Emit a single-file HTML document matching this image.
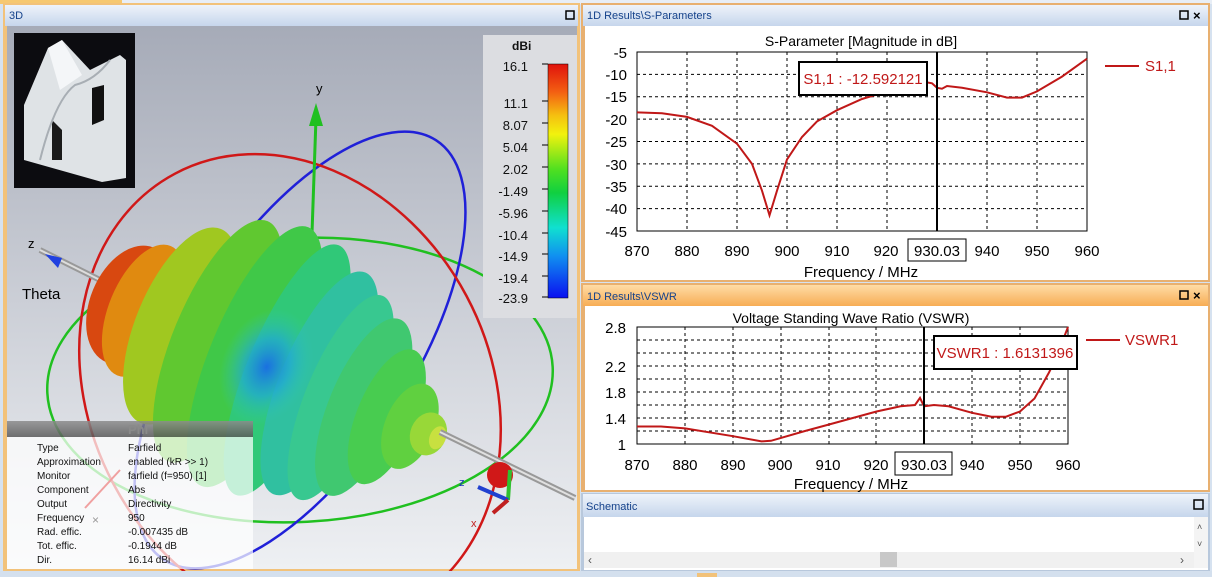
<!DOCTYPE html>
<html><head><meta charset="utf-8"><style>
html,body{margin:0;padding:0;width:1212px;height:577px;overflow:hidden;background:#d6e2f0}
svg{display:block;overflow:hidden}
text{font-family:"Liberation Sans",sans-serif}
</style></head><body>
<svg width="1212" height="577" viewBox="0 0 1212 577" xmlns="http://www.w3.org/2000/svg">
<defs>
<linearGradient id="bg3d" x1="0" y1="0" x2="0" y2="1"><stop offset="0" stop-color="#a6abb8"/><stop offset="0.6" stop-color="#d2d5dc"/><stop offset="1" stop-color="#eef0f3"/></linearGradient>
<linearGradient id="tb" x1="0" y1="0" x2="0" y2="1"><stop offset="0" stop-color="#eef3fa"/><stop offset="1" stop-color="#c6d6ec"/></linearGradient>
<linearGradient id="tbo" x1="0" y1="0" x2="0" y2="1"><stop offset="0" stop-color="#ffdca6"/><stop offset="1" stop-color="#f7ad55"/></linearGradient>
<linearGradient id="cbar" x1="0" y1="0" x2="0" y2="1"><stop offset="0" stop-color="#e0120c"/><stop offset="0.12" stop-color="#f36012"/><stop offset="0.22" stop-color="#f5c010"/><stop offset="0.3" stop-color="#f2f20e"/><stop offset="0.45" stop-color="#50e020"/><stop offset="0.55" stop-color="#10d040"/><stop offset="0.7" stop-color="#10e0d0"/><stop offset="0.82" stop-color="#1090f0"/><stop offset="1" stop-color="#0a10f0"/></linearGradient>
<radialGradient id="dip" cx="0.5" cy="0.5" r="0.5"><stop offset="0" stop-color="#1a70e0"/><stop offset="0.5" stop-color="#20a8d8" stop-opacity="0.7"/><stop offset="1" stop-color="#30c8b0" stop-opacity="0"/></radialGradient>
<linearGradient id="hdr" x1="0" y1="0" x2="0" y2="1"><stop offset="0" stop-color="#8c8c8c"/><stop offset="1" stop-color="#5a5a5a"/></linearGradient>
</defs>

<rect x="0" y="0" width="1212" height="4" fill="#e8eef6"/>
<rect x="0" y="0" width="122" height="4" fill="#f6c870"/>
<rect x="3" y="3" width="577" height="569" fill="#f2c27a"/>
<rect x="5" y="5" width="573" height="21" fill="url(#tb)"/>
<text x="9" y="19" font-size="11" fill="#15428b">3D</text>
<rect x="566" y="11" width="8" height="8" fill="none" stroke="#000" stroke-width="1.5"/>
<rect x="7" y="26" width="570" height="543" fill="url(#bg3d)"/>

<g fill="none" stroke-width="2.5">
<ellipse cx="300" cy="380" rx="253" ry="142" stroke="#20c020" transform="rotate(-3 300 380)"/>
<ellipse cx="300" cy="350" rx="112" ry="250" stroke="#2020d8" transform="rotate(33 300 350)"/>
<ellipse cx="290" cy="390" rx="200" ry="245" stroke="#d01818" transform="rotate(-28 290 390)"/>
</g>
<line x1="311" y1="262" x2="316" y2="118" stroke="#20c020" stroke-width="3"/>
<polygon points="316,103 309,126 323,126" fill="#20c020"/>
<text x="316" y="93" font-size="13" font-family="Liberation Mono" fill="#000">y</text>

<line x1="40" y1="250" x2="100" y2="280" stroke="#999" stroke-width="6"/>
<line x1="40" y1="250" x2="100" y2="280" stroke="#ddd" stroke-width="2"/>
<polygon points="45,254 62,258 58,268" fill="#2040e0"/>
<text x="28" y="248" font-size="13" font-family="Liberation Mono">z</text>
<text x="22" y="299" font-size="15" font-family="Liberation Mono">Theta</text>

<g transform="translate(95 285) rotate(22.5)">
<ellipse cx="40" cy="5" rx="40" ry="62" fill="#d84810"/>
<ellipse cx="55" cy="5" rx="35" ry="70" fill="#e08a10"/>
<ellipse cx="95" cy="5" rx="45" ry="105" fill="#a0c820"/>
<ellipse cx="135" cy="5" rx="45" ry="130" fill="#60c830"/>
<ellipse cx="175" cy="5" rx="45" ry="140" fill="#40c848"/>
<ellipse cx="210" cy="5" rx="40" ry="135" fill="#30c878"/>
<ellipse cx="245" cy="5" rx="40" ry="120" fill="#30c0a0"/>
<ellipse cx="270" cy="10" rx="35" ry="110" fill="#38c890"/>
<ellipse cx="295" cy="10" rx="35" ry="95" fill="#40c870"/>
<ellipse cx="320" cy="10" rx="30" ry="72" fill="#48cc50"/>
<ellipse cx="345" cy="10" rx="25" ry="45" fill="#60d040"/>
<ellipse cx="365" cy="10" rx="18" ry="22" fill="#98d838"/>
<ellipse cx="375" cy="10" rx="8" ry="12" fill="#c8e040"/>
<ellipse cx="190" cy="10" rx="45" ry="60" fill="url(#dip)"/>
</g>
<line x1="440" y1="432" x2="575" y2="498" stroke="#999" stroke-width="6"/>
<line x1="440" y1="432" x2="575" y2="498" stroke="#e0e0e0" stroke-width="2"/>
<circle cx="500" cy="475" r="13" fill="#d01818"/>
<line x1="508" y1="500" x2="510" y2="470" stroke="#30c030" stroke-width="4"/>
<line x1="508" y1="500" x2="478" y2="487" stroke="#2040d0" stroke-width="4"/>
<line x1="508" y1="500" x2="493" y2="513" stroke="#c02020" stroke-width="4"/>
<text x="459" y="486" font-size="11" fill="#1a30c0">z</text>
<text x="471" y="527" font-size="11" fill="#c02020">x</text>

<rect x="14" y="33" width="121" height="155" fill="#0c0c10"/>
<polygon points="24,105 48,48 62,40 90,70 120,55 126,60 126,178 102,182 24,160" fill="#dfe3e6"/>
<polygon points="48,48 62,40 82,75 60,90" fill="#f4f6f8"/>
<polygon points="52,120 62,130 62,160 52,160" fill="#1a1a1a"/>
<polygon points="92,88 104,85 104,120 92,125" fill="#111"/>
<path d="M40 160 Q55 100 75 85 Q95 80 110 60" stroke="#a8aeb4" stroke-width="2" fill="none"/>

<rect x="483" y="35" width="94" height="283" fill="#dcdde1"/>
<text x="512" y="50" font-size="12" font-family="Liberation Mono" font-weight="bold" fill="#111">dBi</text>
<rect x="548" y="64" width="20" height="234" fill="url(#cbar)" stroke="#000" stroke-width="0.5"/>
<g font-family="Liberation Mono" font-size="13" fill="#111" text-anchor="end">
<text x="528" y="71">16.1</text><text x="528" y="108">11.1</text><text x="528" y="130">8.07</text>
<text x="528" y="152">5.04</text><text x="528" y="174">2.02</text><text x="528" y="196">-1.49</text>
<text x="528" y="218">-5.96</text><text x="528" y="240">-10.4</text><text x="528" y="261">-14.9</text>
<text x="528" y="283">-19.4</text><text x="528" y="303">-23.9</text>
</g>
<g stroke="#000" stroke-width="1"><line x1="542" y1="64" x2="548" y2="64"/><line x1="542" y1="101" x2="548" y2="101"/><line x1="542" y1="123" x2="548" y2="123"/><line x1="542" y1="145" x2="548" y2="145"/><line x1="542" y1="167" x2="548" y2="167"/><line x1="542" y1="189" x2="548" y2="189"/><line x1="542" y1="211" x2="548" y2="211"/><line x1="542" y1="233" x2="548" y2="233"/><line x1="542" y1="254" x2="548" y2="254"/><line x1="542" y1="276" x2="548" y2="276"/><line x1="542" y1="297" x2="548" y2="297"/></g>

<rect x="7" y="421" width="246" height="16" fill="url(#hdr)" opacity="0.85"/>
<text x="128" y="434" font-size="13" font-weight="bold" fill="#8a8a8a">Phi</text>
<rect x="7" y="437" width="246" height="132" fill="#ffffff" opacity="0.72"/>
<line x1="85" y1="508" x2="120" y2="470" stroke="#f0a0a0" stroke-width="2"/>
<text x="92" y="524" font-size="12" fill="#999">×</text>
<g font-size="10" fill="#111">
<text x="37" y="451">Type</text><text x="128" y="451">Farfield</text>
<text x="37" y="465">Approximation</text><text x="128" y="465">enabled (kR &gt;&gt; 1)</text>
<text x="37" y="479">Monitor</text><text x="128" y="479">farfield (f=950) [1]</text>
<text x="37" y="493">Component</text><text x="128" y="493">Abs</text>
<text x="37" y="507">Output</text><text x="128" y="507">Directivity</text>
<text x="37" y="521">Frequency</text><text x="128" y="521">950</text>
<text x="37" y="535">Rad. effic.</text><text x="128" y="535">-0.007435 dB</text>
<text x="37" y="549">Tot. effic.</text><text x="128" y="549">-0.1944 dB</text>
<text x="37" y="563">Dir.</text><text x="128" y="563">16.14 dBi</text>
</g>

<rect x="581" y="3" width="629" height="279" fill="#e8b070"/>
<rect x="583" y="5" width="625" height="21" fill="url(#tb)"/>
<text x="587" y="19" font-size="11" fill="#15428b">1D Results\S-Parameters</text>
<rect x="1180" y="11" width="8" height="8" fill="none" stroke="#000" stroke-width="1.5"/>
<text x="1193" y="20" font-size="13" font-weight="bold">×</text>
<rect x="585" y="26" width="623" height="254" fill="#fff"/>
<text x="861" y="46" font-size="14" text-anchor="middle">S-Parameter [Magnitude in dB]</text>
<g stroke="#000" stroke-width="1" stroke-dasharray="3,3">
<line x1="637" y1="74.4" x2="1087" y2="74.4"/><line x1="637" y1="96.8" x2="1087" y2="96.8"/><line x1="637" y1="119.1" x2="1087" y2="119.1"/><line x1="637" y1="141.5" x2="1087" y2="141.5"/><line x1="637" y1="163.9" x2="1087" y2="163.9"/><line x1="637" y1="186.3" x2="1087" y2="186.3"/><line x1="637" y1="208.6" x2="1087" y2="208.6"/>
<line x1="687" y1="52" x2="687" y2="231"/><line x1="737" y1="52" x2="737" y2="231"/><line x1="787" y1="52" x2="787" y2="231"/><line x1="837" y1="52" x2="837" y2="231"/><line x1="887" y1="52" x2="887" y2="231"/><line x1="987" y1="52" x2="987" y2="231"/><line x1="1037" y1="52" x2="1037" y2="231"/>
</g>
<rect x="637" y="52" width="450" height="179" fill="none" stroke="#000" stroke-width="1"/>
<polyline fill="none" stroke="#c01818" stroke-width="2" points="637,112.4 662,113.3 687,116.9 712,125.8 737,143.7 752,163.9 762,190.7 769.5,215.3 777,190.7 787,159.4 802,137 817,121.4 837,110.2 862,99 887,91.4 912,86.9 927,82.4 932,83.3 937,87.8 942,88.7 947,86 962,87.8 987,92.3 1007,97.6 1022,97.6 1037,91.4 1062,76.6 1087,58.7"/>
<line x1="937" y1="52" x2="937" y2="231" stroke="#000" stroke-width="2"/>
<rect x="799" y="62" width="128" height="33" fill="#fff" stroke="#000" stroke-width="2"/>
<text x="863" y="84" font-size="15" fill="#c01818" text-anchor="middle">S1,1 : -12.592121</text>
<g font-size="15" text-anchor="end">
<text x="627" y="58">-5</text><text x="627" y="80">-10</text><text x="627" y="102">-15</text><text x="627" y="125">-20</text><text x="627" y="147">-25</text><text x="627" y="170">-30</text><text x="627" y="192">-35</text><text x="627" y="214">-40</text><text x="627" y="237">-45</text>
</g>
<g font-size="15" text-anchor="middle">
<text x="637" y="256">870</text><text x="687" y="256">880</text><text x="737" y="256">890</text><text x="787" y="256">900</text><text x="837" y="256">910</text><text x="886" y="256">920</text><text x="937" y="256">930.03</text><text x="987" y="256">940</text><text x="1037" y="256">950</text><text x="1087" y="256">960</text>
</g>
<rect x="908" y="239" width="58" height="22" fill="none" stroke="#000"/>
<text x="861" y="277" font-size="15" text-anchor="middle">Frequency / MHz</text>
<line x1="1105" y1="66" x2="1139" y2="66" stroke="#c01818" stroke-width="2"/>
<text x="1145" y="71" font-size="15" fill="#c01818">S1,1</text>

<rect x="581" y="283" width="629" height="209" fill="#e8b070"/>
<rect x="583" y="285" width="625" height="21" fill="url(#tbo)"/>
<text x="587" y="300" font-size="11" fill="#15428b">1D Results\VSWR</text>
<rect x="1180" y="291" width="8" height="8" fill="none" stroke="#000" stroke-width="1.5"/>
<text x="1193" y="300" font-size="13" font-weight="bold">×</text>
<rect x="585" y="306" width="623" height="184" fill="#fff"/>
<text x="851" y="323" font-size="14" text-anchor="middle">Voltage Standing Wave Ratio (VSWR)</text>
<g stroke="#000" stroke-width="1" stroke-dasharray="3,3">
<line x1="637" y1="340" x2="1068" y2="340"/><line x1="637" y1="353" x2="1068" y2="353"/><line x1="637" y1="366" x2="1068" y2="366"/><line x1="637" y1="379" x2="1068" y2="379"/><line x1="637" y1="392" x2="1068" y2="392"/><line x1="637" y1="405" x2="1068" y2="405"/><line x1="637" y1="418" x2="1068" y2="418"/><line x1="637" y1="431" x2="1068" y2="431"/>
<line x1="685" y1="327" x2="685" y2="444"/><line x1="733" y1="327" x2="733" y2="444"/><line x1="781" y1="327" x2="781" y2="444"/><line x1="829" y1="327" x2="829" y2="444"/><line x1="876" y1="327" x2="876" y2="444"/><line x1="972" y1="327" x2="972" y2="444"/><line x1="1020" y1="327" x2="1020" y2="444"/>
</g>
<rect x="637" y="327" width="431" height="117" fill="none" stroke="#000" stroke-width="1"/>
<polyline fill="none" stroke="#c01818" stroke-width="2" points="637,426.5 661,426.5 685,428.4 733,436.2 761.5,441.4 771,440.8 805,431 829,424.5 876.5,411.5 900.5,406.3 915,405 920,397.9 924,406.3 934,405 948.5,406.3 972,412.8 991.5,416.7 1006,416.7 1020,411.5 1034.5,398.5 1049,372.5 1058.5,353 1063,340 1068,327"/>
<line x1="924" y1="327" x2="924" y2="444" stroke="#000" stroke-width="2"/>
<rect x="934" y="336" width="143" height="33" fill="#fff" stroke="#000" stroke-width="2"/>
<text x="1005" y="358" font-size="15" fill="#c01818" text-anchor="middle">VSWR1 : 1.6131396</text>
<g font-size="15" text-anchor="end">
<text x="626" y="333">2.8</text><text x="626" y="372">2.2</text><text x="626" y="398">1.8</text><text x="626" y="424">1.4</text><text x="626" y="450">1</text>
</g>
<g font-size="15" text-anchor="middle">
<text x="637" y="470">870</text><text x="685" y="470">880</text><text x="733" y="470">890</text><text x="780" y="470">900</text><text x="828" y="470">910</text><text x="876" y="470">920</text><text x="924" y="470">930.03</text><text x="972" y="470">940</text><text x="1020" y="470">950</text><text x="1068" y="470">960</text>
</g>
<rect x="895" y="452" width="57" height="23" fill="none" stroke="#000"/>
<text x="851" y="489" font-size="15" text-anchor="middle">Frequency / MHz</text>
<line x1="1086" y1="340" x2="1120" y2="340" stroke="#c01818" stroke-width="2"/>
<text x="1125" y="345" font-size="15" fill="#c01818">VSWR1</text>

<rect x="581" y="493" width="629" height="78" fill="#b8c8dc"/>
<rect x="583" y="494" width="625" height="23" fill="url(#tb)"/>
<text x="586" y="510" font-size="11" fill="#15428b">Schematic</text>
<rect x="1194" y="500" width="9" height="9" fill="none" stroke="#000" stroke-width="1.5"/>
<rect x="584" y="517" width="624" height="53" fill="#fff"/>
<rect x="584" y="552" width="610" height="16" fill="#f0f0f0"/>
<rect x="880" y="552" width="17" height="15" fill="#c8c8c8"/>
<text x="588" y="564" font-size="12" fill="#555">‹</text>
<text x="1180" y="564" font-size="12" fill="#555">›</text>
<rect x="1194" y="517" width="14" height="51" fill="#f4f4f4"/>
<text x="1197" y="530" font-size="9" fill="#555">˄</text>
<text x="1197" y="547" font-size="9" fill="#555">˅</text>
<rect x="0" y="571" width="1212" height="6" fill="#d4e0ee"/>
<rect x="697" y="573" width="20" height="4" fill="#f2c27a"/>
</svg>
</body></html>
